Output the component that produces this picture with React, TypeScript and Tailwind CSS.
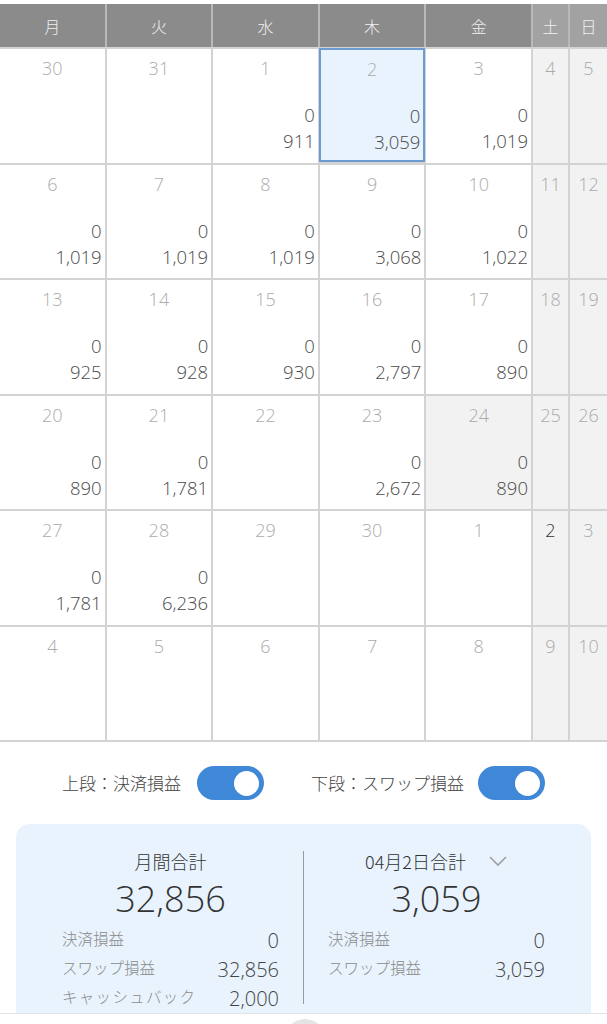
import React from "react";

type Cell = { d: number; a?: string; b?: string; sel?: boolean; grey?: boolean; dark?: boolean };

const rows: Cell[][] = [
  [{ d: 30 }, { d: 31 }, { d: 1, a: "0", b: "911" }, { d: 2, a: "0", b: "3,059", sel: true }, { d: 3, a: "0", b: "1,019" }, { d: 4 }, { d: 5 }],
  [{ d: 6, a: "0", b: "1,019" }, { d: 7, a: "0", b: "1,019" }, { d: 8, a: "0", b: "1,019" }, { d: 9, a: "0", b: "3,068" }, { d: 10, a: "0", b: "1,022" }, { d: 11 }, { d: 12 }],
  [{ d: 13, a: "0", b: "925" }, { d: 14, a: "0", b: "928" }, { d: 15, a: "0", b: "930" }, { d: 16, a: "0", b: "2,797" }, { d: 17, a: "0", b: "890" }, { d: 18 }, { d: 19 }],
  [{ d: 20, a: "0", b: "890" }, { d: 21, a: "0", b: "1,781" }, { d: 22 }, { d: 23, a: "0", b: "2,672" }, { d: 24, a: "0", b: "890", grey: true }, { d: 25 }, { d: 26 }],
  [{ d: 27, a: "0", b: "1,781" }, { d: 28, a: "0", b: "6,236" }, { d: 29 }, { d: 30 }, { d: 1 }, { d: 2, dark: true }, { d: 3 }],
  [{ d: 4 }, { d: 5 }, { d: 6 }, { d: 7 }, { d: 8 }, { d: 9 }, { d: 10 }],
];

const heads = ["月", "火", "水", "木", "金", "土", "日"];
const NUM = { fontFamily: '"Open Sans", "Noto Sans", sans-serif' };

function Toggle() {
  return (
    <div className="w-[67px] h-[34px] rounded-full bg-[#3f87d7] flex items-center justify-end pr-[5px]">
      <div className="w-[25px] h-[25px] rounded-full bg-white" />
    </div>
  );
}

function Row({ label, value, wide }: { label: string; value: string; wide?: boolean }) {
  return (
    <div className="flex items-center justify-between h-[29px]">
      <span className={`text-[15.5px] text-[#8a8a8a] font-light -mt-[4px] ${wide ? "tracking-[1.3px]" : ""}`}>{label}</span>
      <span className="text-[20px] text-[#444] font-light" style={NUM}>
        {value}
      </span>
    </div>
  );
}

export default function App() {
  return (
    <div
      className="w-[607px] h-[1024px] overflow-hidden bg-white relative"
      style={{ fontFamily: '"Noto Sans CJK JP", "Noto Sans", sans-serif' }}
    >
      <div className="pt-[4px]">
        <div className="grid grid-cols-[repeat(5,minmax(0,1fr))_35px_37px] gap-x-[2px] bg-[#b9b9b9] h-[43px]">
          {heads.map((h, i) => (
            <div
              key={h}
              className={`flex items-center justify-center text-[16px] font-light text-[#f0f0f0] ${i >= 5 ? "bg-[#a2a2a2]" : "bg-[#8b8b8b]"}`}
            >
              {h}
            </div>
          ))}
        </div>
        <div className="grid grid-cols-[repeat(5,minmax(0,1fr))_35px_37px] gap-[2px] bg-[#d3d3d3] py-[2px]">
          {rows.flat().map((c, i) => {
            const col = i % 7;
            const weekend = col >= 5;
            let bg = "bg-white";
            if (weekend || c.grey) bg = "bg-[#f2f2f2]";
            if (c.sel) bg = "bg-[#e8f3fd]";
            return (
              <div
                key={i}
                className={`h-[113.5px] ${bg} flex flex-col ${c.sel ? "border-2 border-[#6b9bd0] -m-[1px]" : ""}`}
                style={NUM}
              >
                <div
                  className={`text-center text-[18px] font-light mt-[7px] leading-[24px] ${c.dark ? "text-[#333]" : "text-[#ababab]"}`}
                >
                  {c.d}
                </div>
                {c.a !== undefined && (
                  <div className="mt-[22px] pr-[3px] text-right text-[18.5px] font-light text-[#4a4a4a] leading-[26px]">
                    <div>{c.a}</div>
                    <div>{c.b}</div>
                  </div>
                )}
              </div>
            );
          })}
        </div>
      </div>

      <div className="flex items-center h-[80px] pt-[2px]">
        <div className="flex items-center ml-[62px]">
          <span className="text-[17px] font-light text-[#444]">上段：決済損益</span>
          <div className="ml-[16px]">
            <Toggle />
          </div>
        </div>
        <div className="flex items-center ml-[47px]">
          <span className="text-[17px] font-light text-[#444]">下段：スワップ損益</span>
          <div className="ml-[14px]">
            <Toggle />
          </div>
        </div>
      </div>

      <div className="mx-[16px] mt-[2px] rounded-[14px] bg-[#e8f3fd] px-[46px] pt-[24px] pb-[30px] grid grid-cols-[217px_49px_217px]">
        <div className="flex flex-col">
          <div className="text-center text-[18px] font-light text-[#333] leading-[26px]">月間合計</div>
          <div className="text-center text-[36px] text-[#333] font-light leading-[46px] mt-[2px]" style={NUM}>
            32,856
          </div>
          <div className="mt-[4px]">
            <Row label="決済損益" value="0" />
            <Row label="スワップ損益" value="32,856" />
            <Row label="キャッシュバック" value="2,000" wide />
          </div>
        </div>
        <div className="flex justify-center">
          <div className="w-[1px] bg-[#9a9a9a] h-[153px] mt-[3px]" />
        </div>
        <div className="flex flex-col">
          <div className="flex items-center justify-center text-[18px] font-light text-[#333] leading-[26px]">
            <span>04月2日合計</span>
            <svg width="20" height="12" viewBox="0 0 20 12" className="ml-[22px]">
              <polyline points="2,2 10,10 18,2" fill="none" stroke="#a0a0a0" strokeWidth="1.6" />
            </svg>
          </div>
          <div className="text-center text-[36px] text-[#333] font-light leading-[46px] mt-[2px]" style={NUM}>
            3,059
          </div>
          <div className="mt-[4px]">
            <Row label="決済損益" value="0" />
            <Row label="スワップ損益" value="3,059" />
          </div>
        </div>
      </div>

      <div className="absolute left-0 right-0 top-[1013px] h-[11px] bg-white border-t border-[#e2e2e2]">
        <div className="absolute left-[285px] top-[5px] w-[40px] h-[40px] rounded-full bg-[#e4e4e4]" />
      </div>
    </div>
  );
}
